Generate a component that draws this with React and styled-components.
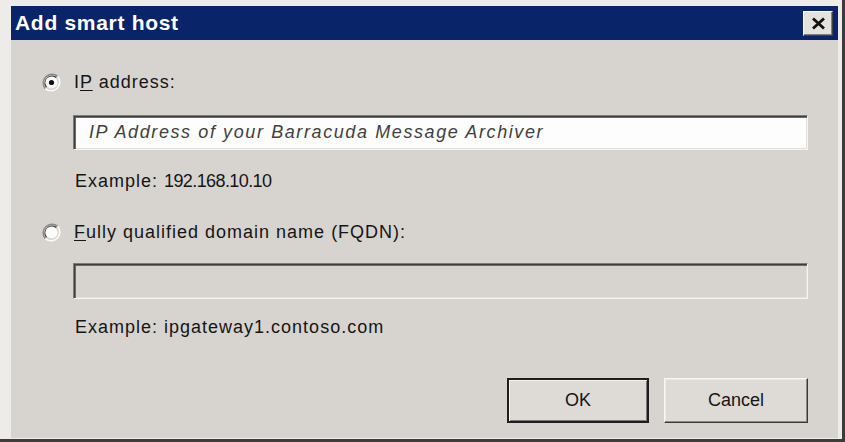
import React from "react";
import styled, { createGlobalStyle } from "styled-components";

const Global = createGlobalStyle`
  html, body {
    margin: 0;
    padding: 0;
    background: #d7d4cf;
  }
  body {
    font-family: "Liberation Sans", Arial, sans-serif;
    -webkit-font-smoothing: antialiased;
  }
`;

const Frame = styled.div`
  box-sizing: border-box;
  width: 845px;
  height: 442px;
  background: #eeece9;
  padding: 6px 4px 1px 11px;
  border-right: 3px solid #3c3c3c;
  border-bottom: 3px solid #3c3c3c;
  display: flex;
  flex-direction: column;
`;

const TitleBar = styled.div`
  height: 34px;
  flex: none;
  background: #0a246a;
  display: flex;
  align-items: center;
  justify-content: space-between;
  padding: 0 5px 0 4px;
`;

const Title = styled.span`
  color: #fff;
  font-weight: bold;
  font-size: 21px;
  letter-spacing: 0.7px;
`;

const CloseButton = styled.button`
  box-sizing: border-box;
  width: 30px;
  height: 25px;
  padding: 0;
  margin-top: 1px;
  display: flex;
  align-items: center;
  justify-content: center;
  background: #e4e2de;
  border: 1px solid;
  border-color: #ffffff #404040 #404040 #ffffff;
  box-shadow: inset -1px -1px 0 #808080;
`;

const Body = styled.div`
  flex: 1;
  background: #d7d4cf;
  display: flex;
  flex-direction: column;
  padding: 30px 30px 0 31px;
`;

const RadioRow = styled.label`
  display: flex;
  align-items: center;
  height: 24px;
  gap: 13px;
  margin-top: ${(p) => p.$top}px;
  font-size: 18px;
  letter-spacing: 1px;
  color: #151515;
`;

const Field = styled.div`
  box-sizing: border-box;
  height: ${(p) => p.$h}px;
  margin: ${(p) => p.$top}px 0 0 31px;
  background: ${(p) => (p.$disabled ? "#d7d4cf" : "#fdfdfd")};
  border: 1px solid;
  border-color: #7c7c7c #f6f5f3 #f6f5f3 #7c7c7c;
  box-shadow: inset 1px 1px 0 #3e3e3e, inset 2px 2px 0 #6a6a6a,
    inset -1px -1px 0 #e2e0dc;
  display: flex;
  align-items: center;
  padding-left: 15px;
`;

const Hint = styled.span`
  font-style: italic;
  font-size: 18px;
  color: #404040;
  letter-spacing: 1.6px;
`;

const Example = styled.div`
  margin: ${(p) => p.$top}px 0 0 33px;
  height: 22px;
  line-height: 22px;
  font-size: 18px;
  letter-spacing: 1px;
  color: #151515;
`;

/* dotted numeric addresses are set tighter than the words around them */
const Numeric = styled.span`
  letter-spacing: -0.6px;
`;

const Buttons = styled.div`
  display: flex;
  justify-content: flex-end;
  gap: 15px;
  margin-top: 40px;
`;

const Button = styled.button`
  box-sizing: border-box;
  width: ${(p) => p.$w}px;
  height: 45px;
  font-family: "Liberation Sans", Arial, sans-serif;
  font-size: 18px;
  color: #151515;
  background: #dedbd6;
  border: ${(p) => (p.$default ? "2px solid #1e1e1e" : "1px solid")};
  border-color: ${(p) =>
    p.$default ? "#1e1e1e" : "#f8f7f5 #3a3a3a #3a3a3a #f8f7f5"};
  box-shadow: ${(p) =>
    p.$default
      ? "inset 1px 1px 0 #f4f3f0, inset -1px -1px 0 #7a7a7a"
      : "inset -1px -1px 0 #8a8a8a, inset 1px 1px 0 #ebe9e5"};
`;

const Key = styled.span`
  text-decoration: underline;
  text-underline-offset: 2px;
`;

function Radio({ checked }) {
  return (
    <svg width="19" height="19" viewBox="0 0 19 19" aria-hidden="true">
      <path d="M3.3 15.7 A8.8 8.8 0 0 1 15.7 3.3" fill="none" stroke="#8a8a8a" strokeWidth="1.6" />
      <path d="M3.3 15.7 A8.8 8.8 0 0 0 15.7 3.3" fill="none" stroke="#fbfbfa" strokeWidth="1.6" />
      <path d="M4.6 14.4 A7 7 0 0 1 14.4 4.6" fill="none" stroke="#3c3c3c" strokeWidth="1.5" />
      <path d="M4.6 14.4 A7 7 0 0 0 14.4 4.6" fill="none" stroke="#d7d4cf" strokeWidth="1.5" />
      <circle cx="9.5" cy="9.5" r="6.1" fill="#fbfbfa" />
      {checked && <circle cx="9.5" cy="9.5" r="2.6" fill="#111" />}
    </svg>
  );
}

export default function App() {
  return (
    <>
      <Global />
      <Frame>
        <TitleBar>
          <Title>Add smart host</Title>
          <CloseButton aria-label="Close">
            <svg width="15" height="13" viewBox="0 0 15 13">
              <path d="M2 1.5 L13 11.5 M13 1.5 L2 11.5" stroke="#111" strokeWidth="2.8" />
            </svg>
          </CloseButton>
        </TitleBar>
        <Body>
          <RadioRow $top={0}>
            <Radio checked />
            <span>
              I<Key>P</Key> address:
            </span>
          </RadioRow>
          <Field $top={21} $h={35}>
            <Hint>IP Address of your Barracuda Message Archiver</Hint>
          </Field>
          <Example $top={20}>
            Example: <Numeric>192.168.10.10</Numeric>
          </Example>
          <RadioRow $top={28}>
            <Radio />
            <span>
              <Key>F</Key>ully qualified domain name (FQDN):
            </span>
          </RadioRow>
          <Field $top={19} $h={36} $disabled />
          <Example $top={17}>Example: ipgateway1.contoso.com</Example>
          <Buttons>
            <Button $w={142} $default>
              OK
            </Button>
            <Button $w={144}>Cancel</Button>
          </Buttons>
        </Body>
      </Frame>
    </>
  );
}
